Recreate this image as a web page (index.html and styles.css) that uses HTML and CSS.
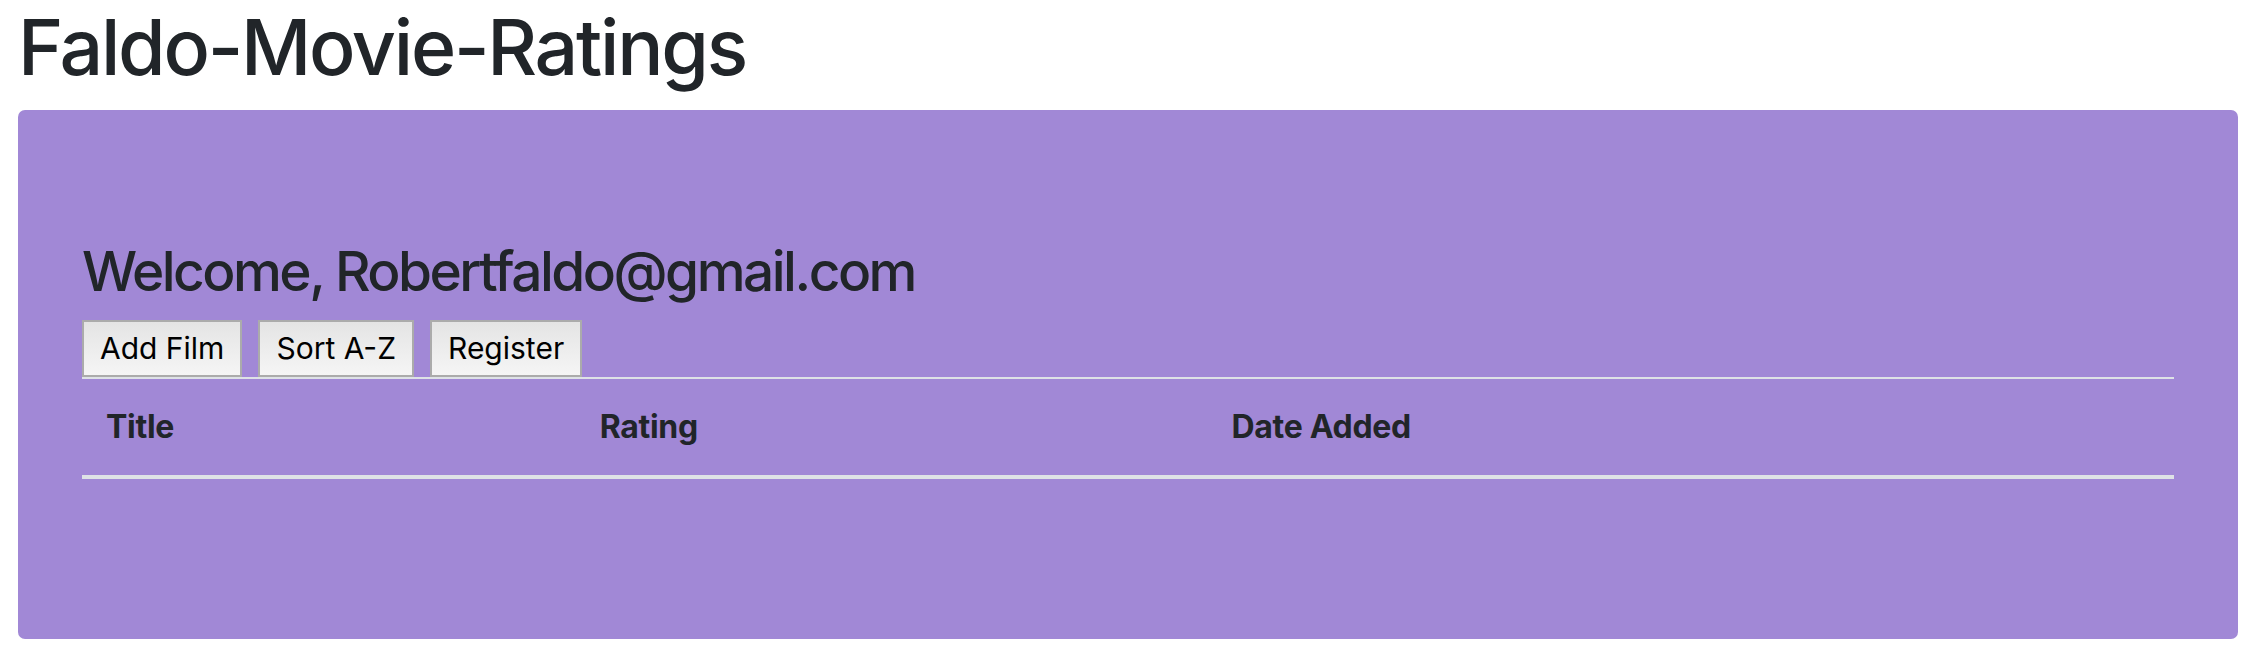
FILE: index.html
```html
<!DOCTYPE html>
<html lang="en">
<head>
<meta charset="utf-8">
<title>Faldo-Movie-Ratings</title>
<link rel="stylesheet" href="styles.css">
</head>
<body>
<div class="page">
  <h1 class="app-title">Faldo-Movie-Ratings</h1>
  <div class="jumbotron">
    <h3 class="welcome">Welcome, Robertfaldo@gmail.com</h3>
    <div class="actions">
      <button class="btn" type="button">Add Film</button>
      <button class="btn" type="button">Sort A-Z</button>
      <button class="btn" type="button">Register</button>
    </div>
    <table class="films">
      <colgroup>
        <col class="col-title">
        <col class="col-rating">
        <col class="col-date">
      </colgroup>
      <thead>
        <tr>
          <th>Title</th>
          <th>Rating</th>
          <th>Date Added</th>
        </tr>
      </thead>
      <tbody></tbody>
    </table>
  </div>
</div>
</body>
</html>
```

FILE: styles.css
```css
html, body {
  margin: 0;
  padding: 0;
  background: #ffffff;
}

body {
  font-family: Inter, "Noto Sans", sans-serif;
  color: #212529;
}

.page {
  padding: 0 24px 0 18px;
}

.app-title {
  margin: 0 0 16px 0;
  font-size: 77px;
  font-weight: 500;
  line-height: 94px;
  letter-spacing: -2.25px;
}

.jumbotron {
  background: #a188d6;
  border-radius: 7px;
  padding: 64px 64px 64px 64px;
  height: 529px;
  box-sizing: border-box;
}

.welcome {
  margin: 64px 0 15px 0;
  font-size: 55px;
  font-weight: 500;
  line-height: 67px;
  letter-spacing: -2.5px;
}

.actions {
  display: flex;
  gap: 16px;
}

.btn {
  font-family: Inter, "Noto Sans", sans-serif;
  font-size: 30px;
  line-height: 48px;
  color: #000000;
  padding: 2px 16px 3px 16px;
  border: 2px solid #ababab;
  border-radius: 0;
  background: linear-gradient(#e4e4e4, #f5f5f5);
  height: 57px;
  box-sizing: border-box;
}

.films {
  width: 100%;
  border-collapse: collapse;
  border-top: 2px solid #dee2e6;
}

.col-title { width: 23.6%; }
.col-rating { width: 30.2%; }

.films th {
  text-align: left;
  font-size: 32px;
  font-weight: 700;
  line-height: 48px;
  padding: 24px;
  border-bottom: 4px solid #dee2e6;
  letter-spacing: -0.3px;
}
```
